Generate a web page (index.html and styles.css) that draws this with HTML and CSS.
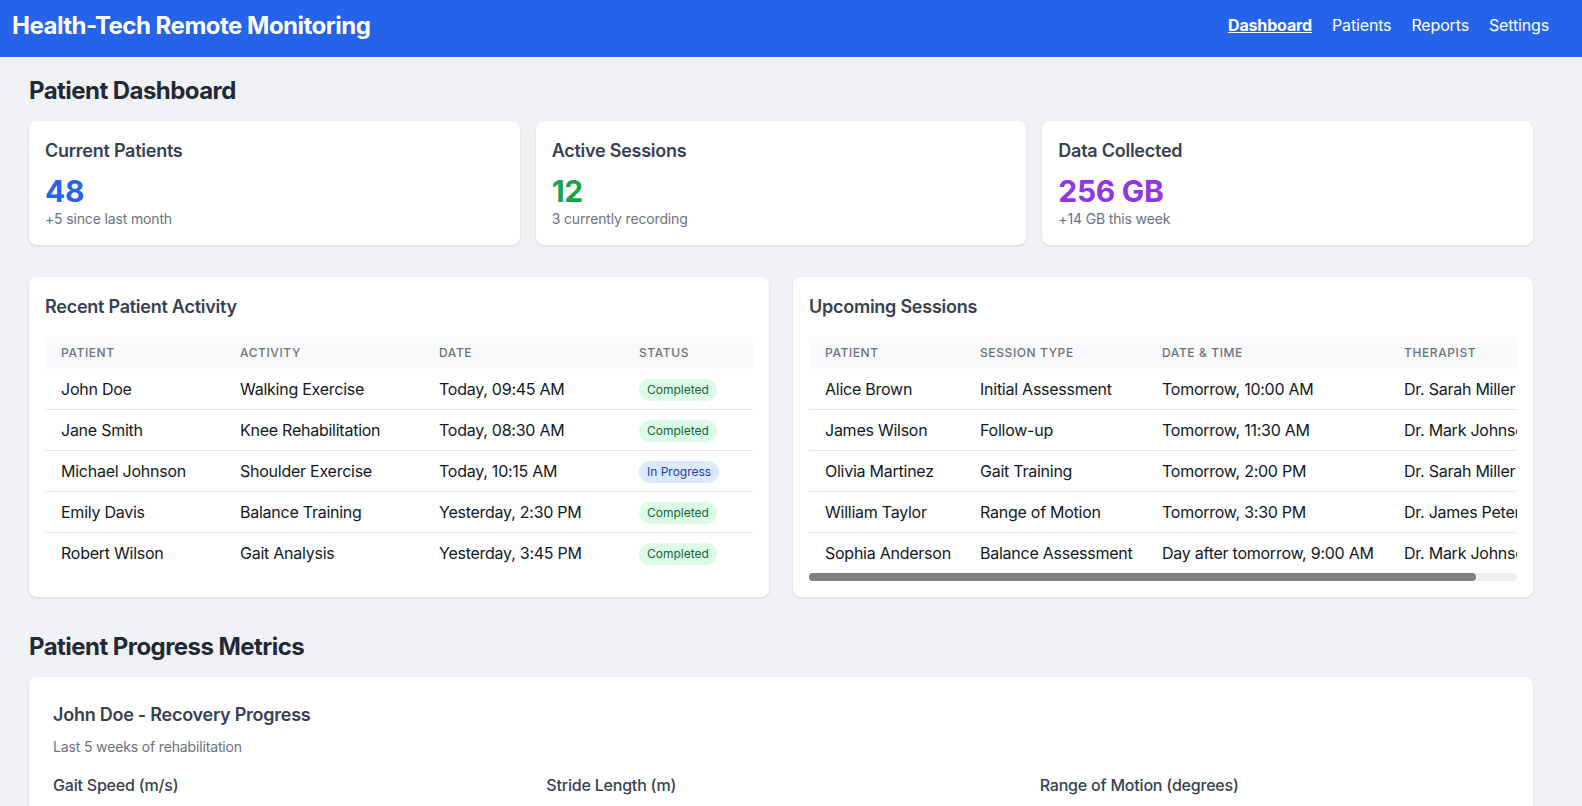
FILE: index.html
```
<!DOCTYPE html>
<html lang="en">
<head>
<meta charset="utf-8">
<title>Health-Tech Remote Monitoring</title>
<link rel="stylesheet" href="styles.css">
</head>
<body>
<header class="topbar">
  <h1 class="brand">Health-Tech Remote Monitoring</h1>
  <nav class="nav">
    <a href="#" class="nav-link active">Dashboard</a>
    <a href="#" class="nav-link">Patients</a>
    <a href="#" class="nav-link">Reports</a>
    <a href="#" class="nav-link">Settings</a>
  </nav>
</header>
<main class="main">
  <h2 class="section-title">Patient Dashboard</h2>
  <div class="stats">
    <div class="card stat">
      <h3 class="stat-title">Current Patients</h3>
      <p class="stat-value blue">48</p>
      <p class="stat-note">+5 since last month</p>
    </div>
    <div class="card stat">
      <h3 class="stat-title">Active Sessions</h3>
      <p class="stat-value green">12</p>
      <p class="stat-note">3 currently recording</p>
    </div>
    <div class="card stat">
      <h3 class="stat-title">Data Collected</h3>
      <p class="stat-value purple">256 GB</p>
      <p class="stat-note">+14 GB this week</p>
    </div>
  </div>

  <div class="panels">
    <div class="card panel">
      <h3 class="panel-title">Recent Patient Activity</h3>
      <div class="table-wrap">
        <table class="table table-activity">
          <colgroup><col class="c1"><col class="c2"><col class="c3"><col class="c4"></colgroup>
          <thead>
            <tr><th>Patient</th><th>Activity</th><th>Date</th><th>Status</th></tr>
          </thead>
          <tbody>
            <tr><td>John Doe</td><td>Walking Exercise</td><td>Today, 09:45 AM</td><td><span class="badge done">Completed</span></td></tr>
            <tr><td>Jane Smith</td><td>Knee Rehabilitation</td><td>Today, 08:30 AM</td><td><span class="badge done">Completed</span></td></tr>
            <tr><td>Michael Johnson</td><td>Shoulder Exercise</td><td>Today, 10:15 AM</td><td><span class="badge progress">In Progress</span></td></tr>
            <tr><td>Emily Davis</td><td>Balance Training</td><td>Yesterday, 2:30 PM</td><td><span class="badge done">Completed</span></td></tr>
            <tr><td>Robert Wilson</td><td>Gait Analysis</td><td>Yesterday, 3:45 PM</td><td><span class="badge done">Completed</span></td></tr>
          </tbody>
        </table>
      </div>
    </div>
    <div class="card panel">
      <h3 class="panel-title">Upcoming Sessions</h3>
      <div class="table-wrap">
        <table class="table table-sessions">
          <colgroup><col class="s1"><col class="s2"><col class="s3"><col class="s4"></colgroup>
          <thead>
            <tr><th>Patient</th><th>Session Type</th><th>Date &amp; Time</th><th>Therapist</th></tr>
          </thead>
          <tbody>
            <tr><td>Alice Brown</td><td>Initial Assessment</td><td>Tomorrow, 10:00 AM</td><td>Dr. Sarah Miller</td></tr>
            <tr><td>James Wilson</td><td>Follow-up</td><td>Tomorrow, 11:30 AM</td><td>Dr. Mark Johnson</td></tr>
            <tr><td>Olivia Martinez</td><td>Gait Training</td><td>Tomorrow, 2:00 PM</td><td>Dr. Sarah Miller</td></tr>
            <tr><td>William Taylor</td><td>Range of Motion</td><td>Tomorrow, 3:30 PM</td><td>Dr. James Peterson</td></tr>
            <tr><td>Sophia Anderson</td><td>Balance Assessment</td><td>Day after tomorrow, 9:00 AM</td><td>Dr. Mark Johnson</td></tr>
          </tbody>
        </table>
      </div>
      <div class="hscroll"><div class="hscroll-thumb"></div></div>
    </div>
  </div>

  <h2 class="section-title">Patient Progress Metrics</h2>
  <div class="card progress-card">
    <h3 class="progress-title">John Doe - Recovery Progress</h3>
    <p class="progress-sub">Last 5 weeks of rehabilitation</p>
    <div class="metrics">
      <div class="metric">
        <h4 class="metric-title">Gait Speed (m/s)</h4>
        <div class="chart"></div>
      </div>
      <div class="metric">
        <h4 class="metric-title">Stride Length (m)</h4>
        <div class="chart"></div>
      </div>
      <div class="metric">
        <h4 class="metric-title">Range of Motion (degrees)</h4>
        <div class="chart"></div>
      </div>
    </div>
  </div>
</main>
</body>
</html>
```

FILE: styles.css
```
html {
  scrollbar-width: none;
}
* {
  box-sizing: border-box;
}
body {
  margin: 0;
  background: #f1f2f5;
  font-family: Inter, "Noto Sans", sans-serif;
  color: #111827;
}

.topbar {
  height: 57px;
  background: #2563eb;
  color: #fff;
  display: flex;
  justify-content: space-between;
  align-items: flex-start;
  padding: 10px 33px 0 12px;
}
.brand {
  margin: 0;
  font-size: 24px;
  line-height: 32px;
  font-weight: 700;
  letter-spacing: -0.5px;
}
.nav {
  display: flex;
  gap: 20px;
  margin-top: 3px;
}
.nav-link {
  color: #fff;
  text-decoration: none;
  font-size: 16px;
  line-height: 24px;
  letter-spacing: -0.15px;
}
.nav-link.active {
  font-weight: 700;
  text-decoration: underline;
}

.main {
  padding: 18px 49px 0 29px;
}
.section-title {
  margin: 0 0 14px;
  font-size: 24px;
  line-height: 32px;
  font-weight: 700;
  color: #1f2937;
  letter-spacing: -0.55px;
}

.card {
  background: #fff;
  border-radius: 8px;
  box-shadow: 0 1px 3px rgba(0, 0, 0, 0.1), 0 1px 2px -1px rgba(0, 0, 0, 0.1);
}

.stats {
  display: grid;
  grid-template-columns: repeat(3, 1fr);
  gap: 16px;
  margin-bottom: 32px;
}
.stat {
  padding: 16px;
}
.stat-title {
  margin: 0;
  font-size: 18px;
  line-height: 28px;
  font-weight: 600;
  color: #374151;
  letter-spacing: -0.25px;
}
.stat-value {
  margin: 8px 0 0;
  font-size: 30px;
  line-height: 36px;
  font-weight: 700;
  letter-spacing: -0.3px;
}
.stat-value.blue { color: #2563eb; }
.stat-value.green { color: #16a34a; }
.stat-value.purple { color: #9333ea; }
.stat-note {
  margin: 0;
  font-size: 14px;
  line-height: 20px;
  color: #6b7280;
  letter-spacing: -0.15px;
}

.panels {
  display: grid;
  grid-template-columns: 1fr 1fr;
  gap: 24px;
  margin-bottom: 34px;
}
.panel {
  padding: 16px;
  min-width: 0;
}
.panel-title {
  margin: 0 0 16px;
  font-size: 18px;
  line-height: 28px;
  font-weight: 600;
  color: #374151;
  letter-spacing: -0.25px;
}
.table-wrap {
  overflow: hidden;
}
.hscroll {
  height: 8px;
  border-radius: 4px;
  background: #efefef;
}
.hscroll-thumb {
  width: 667px;
  height: 8px;
  border-radius: 4px;
  background: #808080;
}
.table {
  border-collapse: collapse;
  table-layout: fixed;
  white-space: nowrap;
}
.table-activity { width: 100%; }
.table-sessions { width: 753px; }
.c1 { width: 179px; }
.c2 { width: 199px; }
.c3 { width: 200px; }
.c4 { width: 130px; }
.s1 { width: 155px; }
.s2 { width: 182px; }
.s3 { width: 242px; }
.s4 { width: 174px; }
.table th {
  background: #f9fafb;
  padding: 8px 16px;
  text-align: left;
  font-size: 12px;
  line-height: 16px;
  font-weight: 500;
  text-transform: uppercase;
  letter-spacing: 0.05em;
  color: #6b7280;
}
.table td {
  padding: 8px 16px;
  height: 40px;
  font-size: 16px;
  line-height: 24px;
  color: #111827;
  letter-spacing: -0.25px;
  overflow: hidden;
}
.table tbody tr + tr td {
  border-top: 1px solid #e5e7eb;
}
.badge {
  display: inline-block;
  vertical-align: top;
  margin-top: 2px;
  padding: 3px 8px;
  border-radius: 9999px;
  font-size: 12px;
  line-height: 16px;
  font-weight: 400;
  letter-spacing: 0;
}
.badge.done {
  background: #dcfce7;
  color: #166534;
}
.badge.progress {
  background: #dbeafe;
  color: #1e40af;
}

.progress-card {
  padding: 24px;
}
.progress-title {
  margin: 0;
  font-size: 18px;
  line-height: 28px;
  font-weight: 600;
  color: #374151;
  letter-spacing: -0.25px;
}
.progress-sub {
  margin: 8px 0 16px;
  font-size: 14px;
  line-height: 20px;
  color: #6b7280;
  letter-spacing: -0.15px;
}
.metrics {
  display: grid;
  grid-template-columns: repeat(3, 1fr);
  gap: 24px;
}
.metric-title {
  margin: 0 0 8px;
  font-size: 16px;
  line-height: 24px;
  font-weight: 500;
  color: #374151;
  letter-spacing: -0.2px;
}
.chart {
  height: 200px;
}
```
